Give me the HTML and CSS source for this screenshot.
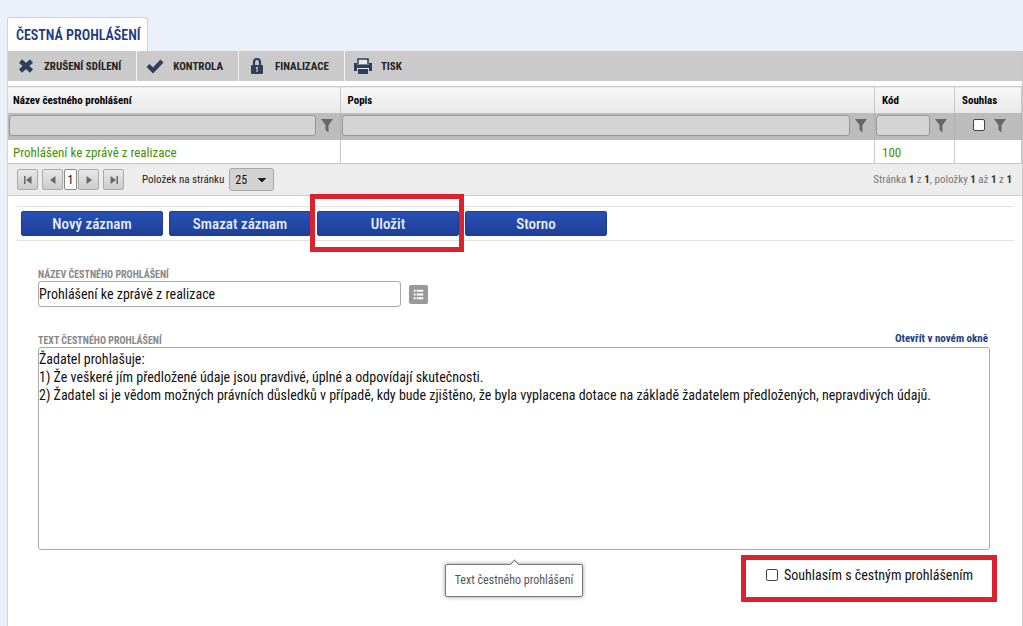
FILE: index.html
```html
<!DOCTYPE html>
<html lang="cs">
<head>
<meta charset="utf-8">
<meta name="viewport" content="width=device-width, initial-scale=1">
<title>Čestná prohlášení</title>
<link rel="stylesheet" href="styles.css">
</head>
<body>
<svg class="symbols" aria-hidden="true">
  <symbol id="funnel" viewBox="0 0 12 15"><path d="M0 1h12L7.500 7v7.500L4.500 12V7z"/></symbol>
</svg>
<h1 class="tab">ČESTNÁ PROHLÁŠENÍ</h1>
<main class="panel">
  <nav class="toolbar">
    <button class="tool" type="button">
      <svg class="tool-icon" viewBox="0 0 18 18"><path d="M3.500 4l11 10M14.500 4l-11 10" fill="none" stroke="#2e3f5b" stroke-width="4.500"/></svg>
      ZRUŠENÍ SDÍLENÍ
    </button>
    <button class="tool" type="button">
      <svg class="tool-icon" viewBox="0 0 18 18"><path d="M2 8.500l5 5L16 4" fill="none" stroke="#2e3f5b" stroke-width="4.200"/></svg>
      KONTROLA
    </button>
    <button class="tool" type="button">
      <svg class="tool-icon" viewBox="0 0 18 18"><path d="M6 9V5a3 3 0 0 1 6 0v4" fill="none" stroke="#2e3f5b" stroke-width="2.200"/><rect x="3" y="8" width="12" height="9" rx="1" fill="#2e3f5b"/><path d="M8.200 10h1.600v1.500h-.3V15h-1v-3.500h-.3z" fill="#dce6f2"/></svg>
      FINALIZACE
    </button>
    <button class="tool" type="button">
      <svg class="tool-icon" viewBox="0 0 18 18"><path d="M4 7V2h10v5" fill="#e4edf6" stroke="#2e3f5b" stroke-width="1.500"/><path d="M0 6h3v1.500h12V6h3v8h-3v-3H3v3H0z" fill="#2e3f5b"/><path d="M4 12h10v5H4z" fill="#2e3f5b"/><path d="M3 11.500h12" stroke="#e4edf6"/></svg>
      TISK
    </button>
  </nav>

  <table class="grid">
    <colgroup><col class="col-name"><col><col class="col-code"><col class="col-agree"></colgroup>
    <thead>
      <tr class="heads"><th>Název čestného prohlášení</th><th>Popis</th><th>Kód</th><th>Souhlas</th></tr>
      <tr class="filters">
        <td><div class="filter"><input type="text" aria-label="Filtr: název"><svg class="funnel"><use href="#funnel"/></svg></div></td>
        <td><div class="filter"><input type="text" aria-label="Filtr: popis"><svg class="funnel"><use href="#funnel"/></svg></div></td>
        <td><div class="filter"><input type="text" aria-label="Filtr: kód"><svg class="funnel"><use href="#funnel"/></svg></div></td>
        <td><div class="filter filter-check"><input class="check" type="checkbox" aria-label="Filtr: souhlas"><svg class="funnel"><use href="#funnel"/></svg></div></td>
      </tr>
    </thead>
    <tbody>
      <tr class="row"><td>Prohlášení ke zprávě z realizace</td><td></td><td>100</td><td></td></tr>
    </tbody>
  </table>

  <div class="pager">
    <div class="pages">
      <button class="page-btn" type="button" aria-label="První"><svg viewBox="0 0 10 10"><path d="M1 1h1.500v8H1zM8.500 1v8L3 5z"/></svg></button>
      <div class="pages-near">
        <button class="page-btn" type="button" aria-label="Předchozí"><svg viewBox="0 0 10 10"><path d="M7.500 1v8L2 5z"/></svg></button>
        <button class="page-num" type="button">1</button>
        <button class="page-btn" type="button" aria-label="Další"><svg viewBox="0 0 10 10"><path d="M2.500 1v8L8 5z"/></svg></button>
      </div>
      <button class="page-btn" type="button" aria-label="Poslední"><svg viewBox="0 0 10 10"><path d="M7.500 1H9v8H7.500zM1.500 1v8L7 5z"/></svg></button>
    </div>
    <label class="per-page" for="size">Položek na stránku</label>
    <select class="size" id="size"><option>25</option></select>
    <p class="summary">Stránka <b>1</b> z <b>1</b>, položky <b>1</b> až <b>1</b> z <b>1</b></p>
  </div>

  <div class="actions">
    <button class="action" type="button">Nový záznam</button>
    <button class="action" type="button">Smazat záznam</button>
    <button class="action marked" type="button">Uložit</button>
    <button class="action" type="button">Storno</button>
  </div>

  <form class="form">
    <label class="caption" for="name">NÁZEV ČESTNÉHO PROHLÁŠENÍ</label>
    <div class="name-line">
      <input class="name" id="name" type="text" value="Prohlášení ke zprávě z realizace">
      <button class="list-btn" type="button" aria-label="Výběr"><svg viewBox="0 0 20 20"><path d="M5 5h2v2H5zM8 5h7v2H8zM5 9h2v2H5zM8 9h7v2H8zM5 13h2v2H5zM8 13h7v2H8z" fill="#fff"/></svg></button>
    </div>
    <div class="text-head">
      <label class="caption" for="text">TEXT ČESTNÉHO PROHLÁŠENÍ</label>
      <a class="open" href="#">Otevřít v novém okně</a>
    </div>
    <textarea class="text" id="text">Žadatel prohlašuje:
1) Že veškeré jím předložené údaje jsou pravdivé, úplné a odpovídají skutečnosti.
2) Žadatel si je vědom možných právních důsledků v případě, kdy bude zjištěno, že byla vyplacena dotace na základě žadatelem předložených, nepravdivých údajů.</textarea>
    <div class="foot">
      <div class="tip" role="tooltip">Text čestného prohlášení</div>
      <label class="consent"><input class="check" type="checkbox">Souhlasím s čestným prohlášením</label>
    </div>
  </form>
</main>
</body>
</html>
```
FILE: styles.css
```css
* { box-sizing: border-box; }
body {
  margin: 0;
  padding: 17px 0 0 7px;
  min-height: 100vh;
  display: flex;
  flex-direction: column;
  align-items: flex-start;
  background: #ecf0fb;
  font-family: "Roboto Condensed", Roboto, sans-serif;
  font-size: 11px;
  color: #111;
}
button, input, select, textarea { font: inherit; color: inherit; margin: 0; padding: 0; }
.symbols { display: none; }

.tab {
  margin: 0;
  height: 34px;
  padding: 0 6px 0 8px;
  line-height: 34px;
  font-size: 14px;
  font-weight: 600;
  color: #1c3a80;
  background: #fff;
  border: 1px solid #ccd0dc;
  border-bottom: 0;
  border-radius: 3px 3px 0 0;
}
.panel {
  flex: 1;
  align-self: stretch;
  background: #fff;
  border-left: 1px solid #cdd0dc;
  border-right: 1px solid #c8c8c8;
}

.toolbar { display: flex; height: 30px; margin-bottom: 5px; background: #cacaca; }
.tool {
  display: flex;
  align-items: center;
  gap: 9px;
  padding: 0 15px 0 9px;
  border: 0;
  border-right: 1px solid #f2f2f2;
  background: none;
  font-weight: 700;
  color: #222;
}
.tool:last-child { border: 0; }
.tool-icon { width: 18px; height: 18px; }

.grid { width: 100%; table-layout: fixed; border-collapse: collapse; }
.col-name { width: 332px; }
.col-code { width: 80px; }
.col-agree { width: 67px; }
.grid th, .grid td { padding: 0 0 0 5px; text-align: left; border-right: 1px solid #c8c8c8; }
.grid th { padding-top: 1px; color: #000; }
.grid th:nth-child(n+2), .row td:nth-child(n+2) { padding-left: 7px; }
.heads { height: 26px; background: linear-gradient(#f8f8f8, #e8e8e8); border-top: 1px solid #ccc; }
.filters { height: 27px; background: #bcbcbc; }
.filters td { padding: 0 0 2px 1px; border-color: #b0b0b0; }
.filter { display: flex; align-items: center; gap: 5px; padding-right: 7px; }
.filter input[type="text"] { flex: 1; min-width: 0; height: 21px; border: 1px solid #969696; border-radius: 3px; background: #d4d4d4; }
.funnel { width: 12px; height: 15px; fill: #666; }
.filter-check { justify-content: flex-end; gap: 9px; padding-right: 15px; }
.row { height: 24px; font-size: 13px; color: #449000; }
.row td { padding-top: 2px; border-bottom: 1px solid #c8c8c8; }

.check { appearance: none; width: 12px; height: 12px; border: 1px solid #444; border-radius: 2px; background: #fff; }

.pager { display: flex; align-items: center; height: 32px; padding: 0 9px; background: #ededed; border-bottom: 1px solid #ccc; }
.pages { display: flex; gap: 4px; }
.pages-near { display: flex; gap: 1px; }
.page-btn { width: 21px; height: 21px; display: grid; place-items: center; border: 1px solid #aaa; border-radius: 2px; background: linear-gradient(#e8e8e8, #ccc); }
.page-btn svg { width: 10px; height: 10px; fill: #666; }
.page-num { width: 13px; height: 21px; border: 1px solid #888; border-radius: 2px; background: #fff; font-size: 12px; }
.per-page { margin: 0 5px 0 18px; color: #222; }
.size {
  appearance: none;
  width: 45px;
  height: 23px;
  padding-left: 5px;
  border: 1px solid #a8a8a8;
  border-radius: 3px;
  background: linear-gradient(#222, #222) 28px 9px / 8px 1px no-repeat, linear-gradient(#222, #222) 29px 10px / 6px 1px no-repeat, linear-gradient(#222, #222) 30px 11px / 4px 1px no-repeat, linear-gradient(#222, #222) 31px 12px / 2px 1px no-repeat, #d2d2d2;
  font-size: 12px;
}
.summary { margin: 0 1px 0 auto; color: #777; }
.summary b { color: #333; }

.actions { display: flex; gap: 6px; margin: 10px 8px 0 9px; padding: 4px; border: solid #e2e2e2; border-width: 1px 0; }
.action {
  width: 142px;
  height: 25px;
  padding-top: 1px;
  border: 1px solid #1d3f8c;
  border-radius: 2px;
  background: linear-gradient(#2850b4, #1d4099);
  color: #e8f0ff;
  font-size: 15px;
  font-weight: 500;
  line-height: 22px;
}
.marked { position: relative; }
.marked::after { content: ""; position: absolute; inset: -18px -6px -17px -8px; border: 5px solid #d9232e; pointer-events: none; z-index: 1; }

.form { padding: 27px 32px 0 30px; }
.caption { display: block; height: 13px; line-height: 13px; font-size: 10px; font-weight: 700; color: #888; }
.name-line { display: flex; align-items: center; gap: 8px; margin-bottom: 27px; }
.name { width: 363px; height: 26px; border: 1px solid #aaa; border-radius: 3px; font-size: 14px; }
.list-btn { width: 19px; height: 19px; border: 0; border-radius: 2px; background: #999; }
.list-btn svg { display: block; }
.text-head { display: flex; justify-content: space-between; }
.open { padding-right: 2px; line-height: 9px; font-weight: 700; color: #1c3f87; text-decoration: none; }
.text { display: block; width: 100%; height: 203px; padding: 2px 0; border: 1px solid #aaa; border-radius: 3px; background: #fff; font-size: 14px; line-height: 18px; resize: none; }
.foot { display: grid; grid-template-columns: 1fr auto 1fr; align-items: start; padding-top: 5px; }
.tip { position: relative; grid-column: 2; margin-top: 9px; padding: 0 9px; line-height: 31px; border: 1px solid #777; border-radius: 2px; background: #fff; box-shadow: 0 0 4px #999; font-size: 12px; color: #555; }
.tip::before { content: ""; position: absolute; top: -4px; left: calc(50% - 3px); width: 6px; height: 6px; border: solid #777; border-width: 1px 0 0 1px; background: #fff; transform: rotate(45deg); }
.consent { justify-self: end; display: flex; gap: 6px; margin-right: -7px; height: 47px; padding: 6px 19px 0 20px; border: 5px solid #d9232e; font-size: 14px; line-height: 19px; white-space: nowrap; }
.consent .check { margin-top: 3px; }
```
